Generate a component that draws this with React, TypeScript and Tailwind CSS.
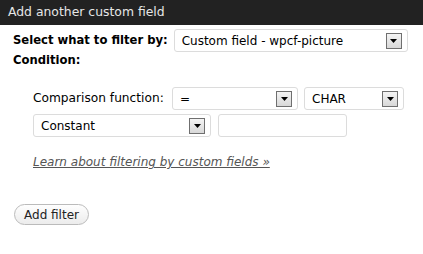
import React from 'react';

const font = { fontFamily: '"DejaVu Sans", Verdana, sans-serif' };

const Arrow = () => (
  <span className="absolute right-[5px] top-1/2 -translate-y-1/2 flex h-[16px] w-[16px] items-center justify-center border border-[#6f6f6f] bg-gradient-to-b from-[#f4f4f4] to-[#d8d8d8]">
    <svg width="7" height="4" viewBox="0 0 7 4">
      <path d="M0 0h7L3.5 4z" fill="#000" />
    </svg>
  </span>
);

const Select = ({ value, width }: { value: string; width: string }) => (
  <div
    className={`relative flex h-[23px] items-center rounded-[3px] border border-[#dcdcdc] bg-white pl-[7px] text-[12px] text-black ${width}`}
  >
    {value}
    <Arrow />
  </div>
);

export default function App() {
  return (
    <div className="h-[254px] w-[423px] bg-white" style={font}>
      <div className="flex h-[25px] items-center bg-[#222222] pl-[8px] text-[12.4px] text-[#e6e6e6]">
        Add another custom field
      </div>

      <div className="pl-[13px]">
        <div className="mt-[4px] flex items-center gap-[6px]">
          <span className="text-[11.6px] font-bold text-black">Select what to filter by:</span>
          <div className="flex h-[23px] w-[234px] relative items-center rounded-[3px] border border-[#dcdcdc] bg-white pl-[7px] text-[12px] text-black">
            Custom field - wpcf-picture
            <Arrow />
          </div>
        </div>
        <div className="text-[11.6px] font-bold leading-[16px] text-black">Condition:</div>

        <div className="mt-[19px] pl-[20px]">
          <div className="flex items-center">
            <span className="w-[139px] text-[12.2px] text-black">Comparison function:</span>
            <Select value="=" width="w-[126px]" />
            <div className="ml-[6px]">
              <Select value="CHAR" width="w-[100px]" />
            </div>
          </div>
          <div className="mt-[4px] flex items-center gap-[7px]">
            <Select value="Constant" width="w-[178px]" />
            <input
              type="text"
              className="h-[23px] w-[129px] rounded-[3px] border border-[#dcdcdc] bg-white outline-none"
            />
          </div>
          <a href="#" className="mt-[16px] block text-[12px] italic text-[#555555] underline">
            Learn about filtering by custom fields »
          </a>
        </div>

        <button className="ml-[1px] mt-[33px] h-[21px] w-[75px] rounded-full border border-[#bbbbbb] bg-gradient-to-b from-[#fefefe] to-[#ececec] text-[12px] text-[#222]">
          Add filter
        </button>
      </div>
    </div>
  );
}
